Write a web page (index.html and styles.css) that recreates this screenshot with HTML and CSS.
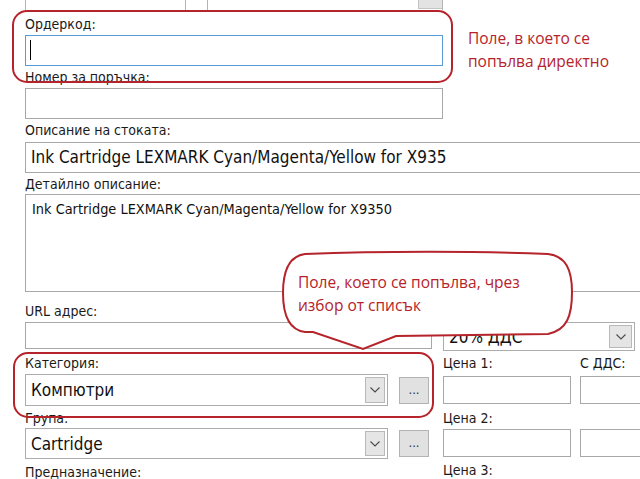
FILE: index.html
```html
<!DOCTYPE html>
<html lang="bg">
<head>
<meta charset="utf-8">
<title>Артикул</title>
<link rel="stylesheet" href="styles.css">
</head>
<body>
<div class="page">
  <div class="toprow">
    <div class="tbox1"></div>
    <div class="tbox2"><span class="tbtn"></span></div>
  </div>

  <div class="sec-top">
    <div class="lbl m4">Ордеркод:</div>
    <div class="inp h31 w417 focus m1"><span class="caret"></span></div>
    <div class="lbl m1">Номер за поръчка:</div>
    <div class="inp h31 w417 m1"></div>
    <div class="lbl m1">Описание на стоката:</div>
    <div class="inp h31 wide big m2">Ink Cartridge LEXMARK Cyan/Magenta/Yellow for X935</div>
    <div class="lbl m1">Детайлно описание:</div>
    <div class="textarea">Ink Cartridge LEXMARK Cyan/Magenta/Yellow for X9350</div>
  </div>

  <div class="lower">
    <div class="leftcol">
      <div class="lbl">URL адрес:</div>
      <div class="inp h27 m1"></div>
      <div class="lbl m4">Категория:</div>
      <div class="comborow h32 m1">
        <div class="combo big"><span class="ctext">Компютри</span><span class="dbtn"><svg width="10" height="6" viewBox="0 0 10 6"><polyline points="0.5,0.5 5,5 9.5,0.5" fill="none" stroke="#4a4a4a" stroke-width="1.1"/></svg></span></div>
        <div class="dots">...</div>
      </div>
      <div class="lbl m2">Група:</div>
      <div class="comborow h31">
        <div class="combo big"><span class="ctext">Cartridge</span><span class="dbtn"><svg width="10" height="6" viewBox="0 0 10 6"><polyline points="0.5,0.5 5,5 9.5,0.5" fill="none" stroke="#4a4a4a" stroke-width="1.1"/></svg></span></div>
        <div class="dots">...</div>
      </div>
      <div class="lbl m3">Предназначение:</div>
    </div>

    <div class="rightcol">
      <div class="combo vat big"><span class="ctext">20% ДДС</span><span class="dbtn"><svg width="10" height="6" viewBox="0 0 10 6"><polyline points="0.5,0.5 5,5 9.5,0.5" fill="none" stroke="#4a4a4a" stroke-width="1.1"/></svg></span></div>
      <div class="lbl m2">Цена 1:</div>
      <div class="lbl m2">С ДДС:</div>
      <div class="inp h28 m3"></div>
      <div class="inp h28 m3 ext"></div>
      <div class="lbl m4">Цена 2:</div>
      <div class="lbl m4"></div>
      <div class="inp h28 m1"></div>
      <div class="inp h28 m1 ext"></div>
      <div class="lbl m3">Цена 3:</div>
    </div>
  </div>

  <div class="note-rect r1"></div>
  <div class="note-text t1">Поле, в което се<br>попълва директно</div>
  <div class="note-rect r2"></div>
  <svg class="bubble" width="640" height="479" viewBox="0 0 640 479">
    <path d="M305 254 C380 251 480 251 548 254 C566 256 572 270 572 292 C572 316 567 330 548 334 L396 336 L363 349 L313 332 L305 332 C289 330 283 315 283 293 C283 270 289 256 305 254 Z" fill="#ffffff" stroke="#b5232b" stroke-width="2"/>
  </svg>
  <div class="note-text t2">Поле, което се попълва, чрез<br>избор от списък</div>
</div>
</body>
</html>
```

FILE: styles.css
```css
html, body {
  margin: 0;
  padding: 0;
  background: #ffffff;
}
body {
  width: 640px;
  height: 479px;
  overflow: hidden;
  font-family: "DejaVu Sans Condensed", "DejaVu Sans", sans-serif;
  font-stretch: condensed;
  font-size: 14px;
  color: #1a1a1a;
}
.page {
  position: relative;
  width: 640px;
  height: 479px;
  padding-left: 25px;
  box-sizing: border-box;
  overflow: hidden;
}
.toprow {
  display: flex;
  height: 10px;
}
.tbox1 {
  width: 161px;
  box-sizing: border-box;
  border-left: 1px solid #b4b4b4;
  border-right: 1px solid #b4b4b4;
}
.tbox2 {
  margin-left: 21px;
  width: 236px;
  box-sizing: border-box;
  border-left: 1px solid #b4b4b4;
  border-right: 1px solid #b4b4b4;
  display: flex;
  justify-content: flex-end;
}
.tbtn {
  width: 23px;
  height: 8px;
  background: #e3e3e3;
  border-left: 1px solid #c4c4c4;
  border-bottom: 1px solid #c4c4c4;
}
.lbl {
  height: 20px;
  line-height: 20px;
  white-space: nowrap;
}
.m1 { margin-top: 1px; }
.m2 { margin-top: 2px; }
.m3 { margin-top: 3px; }
.m4 { margin-top: 4px; }
.inp {
  box-sizing: border-box;
  border: 1px solid #a8a8a8;
  background: #ffffff;
  position: relative;
  white-space: nowrap;
  overflow: hidden;
}
.h27 { height: 27px; }
.h28 { height: 28px; }
.h31 { height: 31px; }
.h32 { height: 32px; }
.w417 { width: 418px; }
.wide { width: 640px; }
.focus { border-color: #5a9bd6; }
.caret {
  position: absolute;
  left: 4px;
  top: 4px;
  width: 1px;
  height: 20px;
  background: #000000;
}
.big {
  font-size: 17px;
  color: #111111;
}
.inp.big {
  line-height: 29px;
  padding-left: 5px;
}
.textarea {
  box-sizing: border-box;
  width: 640px;
  height: 98px;
  border: 1px solid #a8a8a8;
  padding: 5px 6px;
  font-size: 14.4px;
  line-height: 18px;
  color: #111111;
}
.lower {
  display: flex;
  margin-top: 9px;
  gap: 11px;
}
.leftcol {
  width: 407px;
  flex: 0 0 407px;
  display: flex;
  flex-direction: column;
}
.comborow {
  display: flex;
  align-items: center;
  gap: 11px;
}
.combo {
  box-sizing: border-box;
  height: 100%;
  width: 363px;
  border: 1px solid #acacac;
  background: #ffffff;
  display: flex;
  align-items: stretch;
  padding: 2px 2px 2px 0;
}
.ctext {
  flex: 1;
  padding-left: 5px;
  display: flex;
  align-items: center;
  white-space: nowrap;
  overflow: hidden;
}
.dbtn {
  width: 20px;
  box-sizing: border-box;
  background: #e5e5e5;
  border: 1px solid #b9b9b9;
  display: flex;
  align-items: center;
  justify-content: center;
}
.dots {
  box-sizing: border-box;
  width: 30px;
  height: 27px;
  background: #e1e1e1;
  border: 1px solid #b3b3b3;
  text-align: center;
  line-height: 24px;
  font-size: 13px;
  color: #333333;
}
.rightcol {
  flex: 1 1 0;
  min-width: 0;
  display: grid;
  grid-template-columns: 128px minmax(0, 1fr);
  column-gap: 9px;
  align-content: start;
}
.combo.vat {
  grid-column: 1 / span 2;
  width: 192px;
  height: 29px;
  margin-top: 21px;
}
.combo.vat .dbtn { width: 23px; }
.rightcol .inp { width: 100%; }
.rightcol .inp.ext { width: 120px; }
.note-rect {
  position: absolute;
  box-sizing: border-box;
  border: 2px solid #b5232b;
  border-radius: 15px;
}
.r1 {
  left: 12px;
  top: 10px;
  width: 441px;
  height: 73px;
}
.r2 {
  left: 13px;
  top: 352px;
  width: 421px;
  height: 66px;
}
.bubble {
  position: absolute;
  left: 0;
  top: 0;
}
.note-text {
  position: absolute;
  font-family: "Open Sans", "Noto Sans", sans-serif;
  font-stretch: normal;
  font-size: 15.5px;
  line-height: 23px;
  color: #b5232b;
  white-space: nowrap;
}
.t1 {
  left: 468px;
  top: 27px;
}
.t2 {
  left: 298px;
  top: 271px;
}
```
